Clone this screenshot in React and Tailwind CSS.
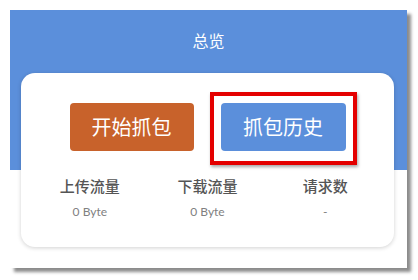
import React from 'react'

const stats = [
  { label: '上传流量', value: '0 Byte' },
  { label: '下载流量', value: '0 Byte' },
  { label: '请求数', value: '-' },
]

export default function App() {
  return (
    <div className="w-[418px] h-[280px] bg-white pt-[10px] pl-[10px] font-['Noto_Sans_CJK_SC',sans-serif]">
      <div className="w-[397px] h-[258px] bg-[linear-gradient(to_bottom,#5b8fdb_160px,#ffffff_160px)] shadow-[4px_4px_3px_rgba(0,0,0,0.45)]">
        <div className="h-[63px] pt-[18px] text-center text-white text-[16px] leading-[24px]">总览</div>

        <div className="ml-[11px] w-[373px] h-[174px] bg-white rounded-[14px] shadow-[0_1px_4px_rgba(0,0,0,0.18)] pt-[30px]">
          <div className="flex justify-center gap-[27px]">
            <button className="w-[124px] h-[48px] rounded-[4px] bg-[#c8622b] text-white text-[20px] leading-none">
              开始抓包
            </button>
            <div className="relative">
              <button className="w-[125px] h-[48px] rounded-[4px] bg-[#5b8fdb] text-white text-[20px] leading-none">
                抓包历史
              </button>
              <div className="absolute -left-[11px] -top-[11px] w-[147px] h-[73px] border-4 border-[#e40000] shadow-[1px_2px_3px_rgba(0,0,0,0.35)]" />
            </div>
          </div>

          <div className="grid grid-cols-3 px-[10px] mt-[24px]">
            {stats.map(s => (
              <div key={s.label} className="text-center">
                <div className="text-[15px] leading-[22px] font-medium text-[#555]">{s.label}</div>
                <div className="mt-[4px] text-[12px] leading-[22px] text-[#808080] font-['Lato',sans-serif]">{s.value}</div>
              </div>
            ))}
          </div>
        </div>
      </div>
    </div>
  )
}
